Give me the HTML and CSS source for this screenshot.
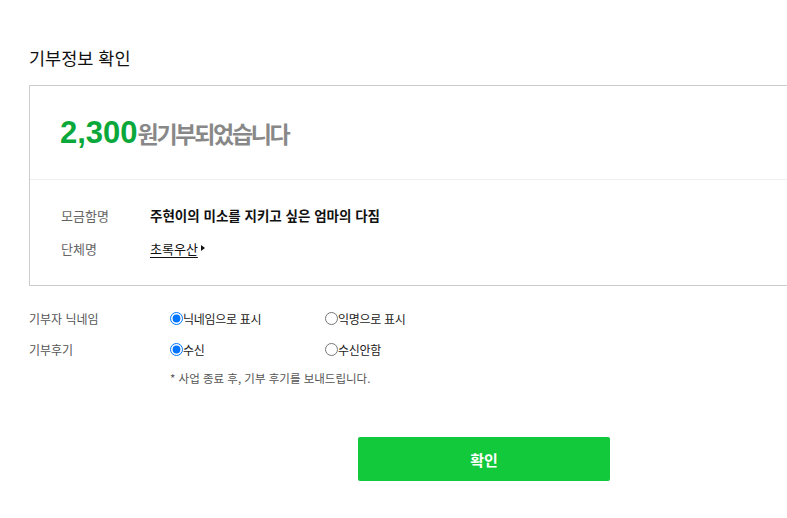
FILE: index.html
```html
<!DOCTYPE html>
<html lang="ko">
<head>
<meta charset="utf-8">
<link rel="stylesheet" href="styles.css">
</head>
<body>
<div class="page">
  <h2 class="title">기부정보 확인</h2>
  <div class="box">
    <div class="summary">
      <span class="amount">2,300</span><span class="done">원기부되었습니다</span>
    </div>
    <div class="details">
      <div class="drow"><span class="dlabel">모금함명</span><span class="dvalue">주현이의 미소를 지키고 싶은 엄마의 다짐</span></div>
      <div class="drow"><span class="dlabel">단체명</span><a class="org" href="#">초록우산</a><span class="tri"></span></div>
    </div>
  </div>
  <div class="form">
    <div class="frow">
      <span class="flabel">기부자 닉네임</span>
      <label class="opt"><input type="radio" name="nick" checked>닉네임으로 표시</label>
      <label class="opt"><input type="radio" name="nick">익명으로 표시</label>
    </div>
    <div class="frow">
      <span class="flabel">기부후기</span>
      <label class="opt"><input type="radio" name="review" checked>수신</label>
      <label class="opt"><input type="radio" name="review">수신안함</label>
    </div>
    <p class="note">* 사업 종료 후, 기부 후기를 보내드립니다.</p>
  </div>
  <div class="actions">
    <button class="confirm" type="button">확인</button>
  </div>
</div>
</body>
</html>
```

FILE: styles.css
```css
html, body {
  margin: 0;
  padding: 0;
  background: #fff;
  overflow-x: hidden;
}
body {
  font-family: "Noto Sans CJK KR", "Noto Sans", sans-serif;
  color: #222;
}
.page {
  width: 910px;
  padding: 48px 0 0 29px;
}
.title {
  margin: 0 0 17px;
  font-size: 17.5px;
  line-height: 20px;
  font-weight: 400;
  color: #111;
}
.box {
  border: 1px solid #ccc;
}
.summary {
  height: 93px;
  display: flex;
  align-items: center;
  padding-left: 30px;
  border-bottom: 1px solid #f0f0f0;
}
.amount {
  font-family: "Liberation Sans", Arial, sans-serif;
  font-size: 31px;
  font-weight: 700;
  color: #0aa83a;
  letter-spacing: 0;
}
.done {
  font-size: 23px;
  font-weight: 700;
  color: #888;
  letter-spacing: -2.3px;
}
.details {
  padding: 24px 0 26px 31px;
  display: flex;
  flex-direction: column;
  gap: 11px;
}
.drow {
  display: flex;
  align-items: center;
  height: 22px;
  font-size: 13px;
}
.dlabel {
  width: 89px;
  color: #666;
}
.dvalue {
  font-size: 13.5px;
  font-weight: 700;
  color: #111;
}
.org {
  color: #111;
  text-decoration: underline;
  text-underline-offset: 3px;
}
.tri {
  width: 0;
  height: 0;
  margin-left: 3px;
  border-left: 4px solid #111;
  border-top: 3px solid transparent;
  border-bottom: 3px solid transparent;
}
.form {
  padding-top: 21px;
  display: flex;
  flex-direction: column;
  gap: 9px;
}
.frow {
  display: flex;
  align-items: center;
  height: 22px;
  font-size: 12px;
}
.flabel {
  width: 141px;
  color: #555;
}
.opt {
  width: 155px;
  display: flex;
  align-items: center;
  color: #222;
  letter-spacing: -0.3px;
}
.opt input {
  margin: 0;
  width: 13px;
  height: 13px;
}
.note {
  margin: 0 0 0 141px;
  font-size: 11.5px;
  line-height: 18px;
  color: #555;
}
.actions {
  display: flex;
  justify-content: center;
  padding-top: 50px;
}
.confirm {
  width: 252px;
  height: 44px;
  border: none;
  border-radius: 2px;
  background: #12c83b;
  color: #fff;
  font-family: inherit;
  font-size: 15px;
  font-weight: 700;
}
```
